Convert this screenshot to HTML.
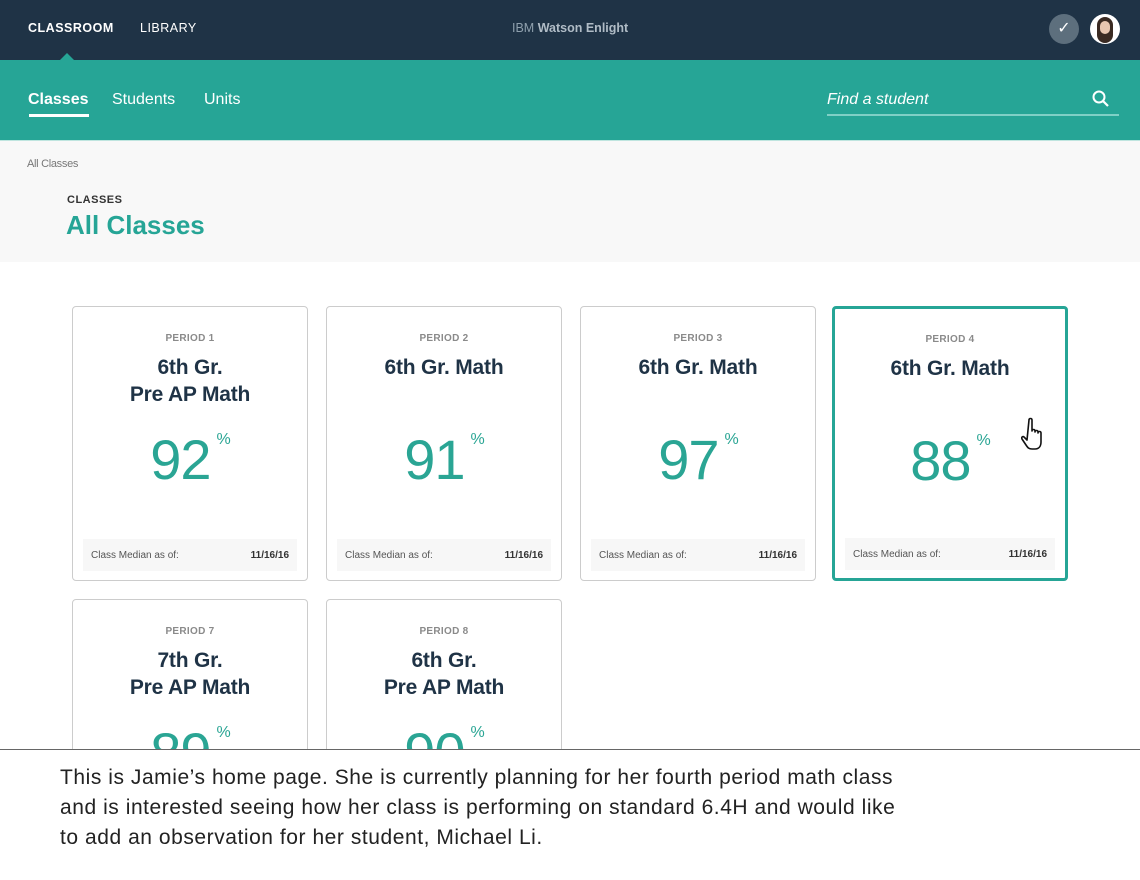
<!DOCTYPE html>
<html><head><meta charset="utf-8"><style>
*{margin:0;padding:0;box-sizing:border-box}
body{width:1140px;height:880px;overflow:hidden;background:#fff;font-family:"Liberation Sans",sans-serif;position:relative}
.top{position:absolute;left:0;top:0;width:1140px;height:60px;background:#1f3346}
.top .l{position:absolute;top:21px;font-size:12.5px;font-weight:bold;color:#fff;letter-spacing:.5px}
.tri{position:absolute;left:60px;top:53px;width:0;height:0;border-left:7px solid transparent;border-right:7px solid transparent;border-bottom:7px solid #26a596}
.sub{position:absolute;left:0;top:60px;width:1140px;height:80px;background:#26a596}
.sub .n{position:absolute;top:31px;font-size:16px;color:#fff}
.hdr{position:absolute;left:0;top:140px;width:1140px;height:122px;background:#f8f8f8;border-top:1px solid #bfe5df}
.card{position:absolute;width:236px;height:275px;border:1.5px solid #ccc;border-radius:4px;background:#fff;text-align:center}
.card.sel{border:3px solid #26a596}
.p{position:absolute;left:0;right:0;top:26px;font-size:10px;font-weight:bold;color:#8a8a8a;letter-spacing:.3px}
.t{position:absolute;left:0;right:0;top:47px;font-size:21px;font-weight:bold;color:#1f3346;line-height:27px;letter-spacing:-.2px}
.num{position:absolute;left:0;right:0;top:120px;font-size:56px;color:#2aa594;font-weight:300;letter-spacing:-1px}
.num sup{font-size:16px;vertical-align:top;position:relative;top:4px;margin-left:6px}
.f{position:absolute;left:10px;right:10px;bottom:9px;height:32px;background:#f7f7f7;font-size:10px;color:#555;display:flex;justify-content:space-between;align-items:center;padding:0 8px}
.f b{color:#333;font-weight:bold}
.ov{position:absolute;left:0;top:749px;width:1140px;height:131px;background:#fff;border-top:1px solid #666;z-index:5}
.ov p{position:absolute;left:60px;top:13px;font-size:21px;line-height:30px;color:#222;letter-spacing:.55px;white-space:nowrap}
</style></head><body>
<div class="top">
<div class="l" style="left:28px">CLASSROOM</div>
<div class="l" style="left:140px;font-weight:normal">LIBRARY</div>
<div style="position:absolute;left:512px;top:21px;font-size:12.5px;color:#8fa0ad">IBM <b style="color:#b0bcc6">Watson Enlight</b></div>
<div style="position:absolute;left:1049px;top:14px;width:30px;height:30px;border-radius:50%;background:#5d6f7d;color:#fff;text-align:center;line-height:30px;font-size:16px">✓</div>
<div style="position:absolute;left:1090px;top:14px;width:30px;height:30px;border-radius:50%;background:#fff;overflow:hidden"><div style="position:absolute;left:7px;top:3px;width:16px;height:26px;border-radius:8px;background:#3a2a22"></div><div style="position:absolute;left:10px;top:7px;width:10px;height:13px;border-radius:5px;background:#e8c6b0"></div></div>
<div class="tri"></div>
</div>
<div class="sub">
<div class="n" style="left:28px;font-weight:bold">Classes</div>
<div style="position:absolute;left:29px;top:54px;width:60px;height:3px;background:#fff"></div>
<div class="n" style="left:112px">Students</div>
<div class="n" style="left:204px">Units</div>
<div class="n" style="left:827px;font-style:italic;color:#fff">Find a student</div>
<div style="position:absolute;left:827px;top:54px;width:292px;height:2px;background:#7fd0c6"></div>
<svg style="position:absolute;left:1091px;top:29px" width="20" height="20" viewBox="0 0 20 20"><circle cx="8" cy="8" r="5.5" fill="none" stroke="#fff" stroke-width="2"/><line x1="12" y1="12" x2="17" y2="17" stroke="#fff" stroke-width="2.2"/></svg>
</div>
<div class="hdr">
<div style="position:absolute;left:27px;top:17px;font-size:11px;color:#777;letter-spacing:-.3px">All Classes</div>
<div style="position:absolute;left:67px;top:53px;font-size:11px;font-weight:bold;color:#333;letter-spacing:.5px">CLASSES</div>
<div style="position:absolute;left:66px;top:69px;font-size:26px;font-weight:bold;color:#26a596">All Classes</div>
</div>

<div class="card" style="left:72px;top:306px"><div class="p">PERIOD 1</div><div class="t">6th Gr.<br>Pre AP Math</div><div class="num">92<sup>%</sup></div><div class="f"><span>Class Median as of:</span><b>11/16/16</b></div></div>
<div class="card" style="left:326px;top:306px"><div class="p">PERIOD 2</div><div class="t">6th Gr. Math</div><div class="num">91<sup>%</sup></div><div class="f"><span>Class Median as of:</span><b>11/16/16</b></div></div>
<div class="card" style="left:580px;top:306px"><div class="p">PERIOD 3</div><div class="t">6th Gr. Math</div><div class="num">97<sup>%</sup></div><div class="f"><span>Class Median as of:</span><b>11/16/16</b></div></div>
<div class="card sel" style="left:832px;top:306px"><div class="p" style="top:25px">PERIOD 4</div><div class="t" style="top:46px">6th Gr. Math</div><div class="num" style="top:119px">88<sup>%</sup></div><div class="f" style="bottom:8px"><span>Class Median as of:</span><b>11/16/16</b></div>
<svg style="position:absolute;left:186px;top:108px" width="30" height="36" viewBox="0 0 30 36"><path d="M8 3c0-2 3-2 3 0v11c0-2 3-2 3 0v1c0-2 3-2 3 0v1c0-2 3-2 3 0v9c0 4-2 7-6 7h-3c-3 0-4-1-6-4l-4-6c-1-2 1-3 2-2l3 3z" fill="#fff" stroke="#111" stroke-width="1.6" stroke-linejoin="round"/></svg></div>
<div class="card" style="left:72px;top:599px"><div class="p">PERIOD 7</div><div class="t">7th Gr.<br>Pre AP Math</div><div class="num">89<sup>%</sup></div></div>
<div class="card" style="left:326px;top:599px"><div class="p">PERIOD 8</div><div class="t">6th Gr.<br>Pre AP Math</div><div class="num">90<sup>%</sup></div></div>

<div class="ov"><p>This is Jamie’s home page. She is currently planning for her fourth period math class<br>and is interested seeing how her class is performing on standard 6.4H and would like<br>to add an observation for her student, Michael Li.</p></div>
</body></html>
